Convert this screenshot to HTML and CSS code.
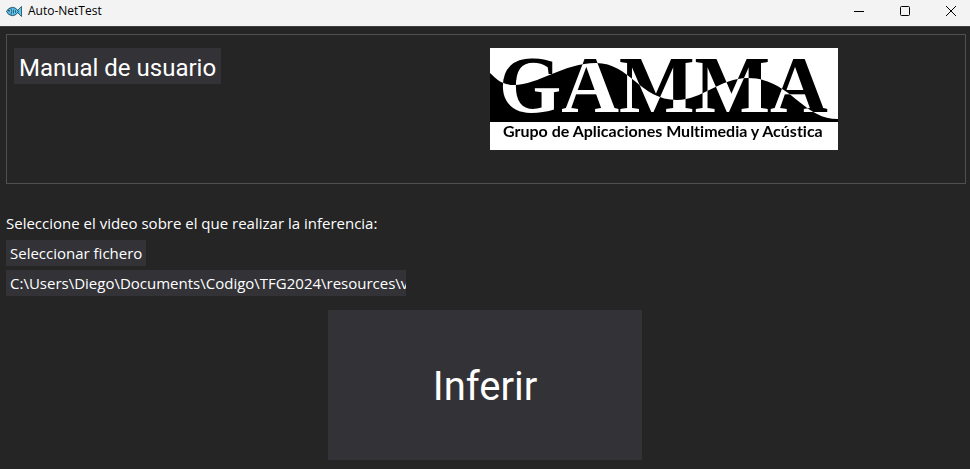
FILE: index.html
```html
<!DOCTYPE html>
<html lang="es">
<head>
<meta charset="utf-8">
<title>Auto-NetTest</title>
<link rel="stylesheet" href="styles.css">
</head>
<body>
<header class="titlebar">
  <svg class="app-icon" viewBox="0 0 16 11" aria-hidden="true">
    <path d="M10.500 5.500 15.500.5v10z" fill="#5cc4ec" stroke="#1c4256" stroke-width=".8"/>
    <path d="M.5 5.500Q2 1.800 6.500 1.300 10 1.300 12.500 5.500 10 9.700 6.500 9.700 2 9.300.5 5.500z" fill="#5cc4ec" stroke="#1c4256" stroke-width=".9"/>
    <path d="M5 2.500Q6.500 5.500 5 8.500M7.500 3.500v4M9.500 4v3" fill="none" stroke="#1c4256" stroke-width=".7"/>
    <circle cx="3" cy="4.700" r=".8" fill="#102028"/>
  </svg>
  <span class="app-name">Auto-NetTest</span>
  <nav class="window-controls" aria-label="Ventana">
    <button class="window-button" aria-label="Minimizar"><svg viewBox="0 0 10 10"><path d="M0 5.500h10"/></svg></button>
    <button class="window-button" aria-label="Maximizar"><svg viewBox="0 0 10 10"><rect x=".5" y=".5" width="9" height="9" rx="1"/></svg></button>
    <button class="window-button" aria-label="Cerrar"><svg viewBox="0 0 10 10"><path d="M0 0l10 10M10 0L0 10"/></svg></button>
  </nav>
</header>
<main class="content">
  <section class="banner">
    <div class="banner-cell"><button class="button button-manual">Manual de usuario</button></div>
    <div class="banner-cell">
      <svg class="logo" viewBox="0 0 348 102" role="img" aria-label="GAMMA">
        <rect width="348" height="102" fill="#fff"/>
        <path d="M0 25C5 29 10 37 24 37C48 37 74 15 106 15C140 15 150 52 187 52C212 52 230 30 258 30C300 30 312 71 348 71V74H0Z" fill="#000"/>
        <text class="logo-name" x="9" y="64">GAMMA</text>
        <text class="logo-tagline" x="13" y="89">Grupo de Aplicaciones Multimedia y Acústica</text>
      </svg>
    </div>
  </section>
  <form class="form">
    <label class="prompt" for="path">Seleccione el video sobre el que realizar la inferencia:</label>
    <button type="button" class="button">Seleccionar fichero</button>
    <input id="path" class="path" type="text" value="C:\Users\Diego\Documents\Codigo\TFG2024\resources\videos">
    <button type="button" class="button button-infer">Inferir</button>
  </form>
</main>
</body>
</html>
```
FILE: styles.css
```css
* { box-sizing: border-box; }
body {
  margin: 0;
  min-height: 100vh;
  background: #252525;
  color: #fff;
  font: 15px/18px "Open Sans", "Liberation Sans", sans-serif;
}
.titlebar {
  display: flex;
  align-items: center;
  height: 26px;
  padding: 0 14px 4px 6px;
  background: #f3f3f3;
  color: #000;
  font: 12px/20px "Open Sans", sans-serif;
}
.app-icon { width: 16px; height: 11px; margin-right: 6px; }
.window-controls { display: flex; gap: 36px; margin-left: auto; }
.window-button {
  display: grid;
  place-items: center;
  width: 10px;
  height: 20px;
  padding: 0;
  border: 0;
  background: none;
}
.window-button svg {
  width: 10px;
  height: 10px;
  overflow: visible;
  fill: none;
  stroke: #000;
  stroke-width: 1;
}
.content { padding: 7px 4px 8px 6px; border-top: 1px solid #404040; }
.banner {
  display: grid;
  grid-template-columns: 1fr 1fr;
  gap: 8px;
  min-height: 150px;
  padding: 13px 7px;
  border: 1px solid #505050;
}
.button, .path {
  height: 26px;
  padding: 0 4px;
  border: 0;
  background: #333337;
  color: #fff;
  font: inherit;
  white-space: nowrap;
}
.button-manual, .button-infer { padding-top: 3px; font-family: Roboto, sans-serif; }
.button-manual { height: 36px; padding: 3px 5px 0; font-size: 24px; }
.logo { display: block; width: 348px; height: 102px; isolation: isolate; }
.logo-name {
  font: bold 80px "Liberation Serif", serif;
  fill: #fff;
  mix-blend-mode: difference;
}
.logo-tagline {
  font: bold 16px Lato, sans-serif;
  font-variant-ligatures: none;
  fill: #000;
}
.form {
  display: flex;
  flex-direction: column;
  align-items: flex-start;
  gap: 4px;
  padding: 30px 2px 0 0;
}
.prompt { height: 22px; }
.path { width: 400px; padding-right: 0; }
.button-infer {
  align-self: center;
  width: 314px;
  height: 150px;
  margin-top: 10px;
  font-size: 40px;
}
```
